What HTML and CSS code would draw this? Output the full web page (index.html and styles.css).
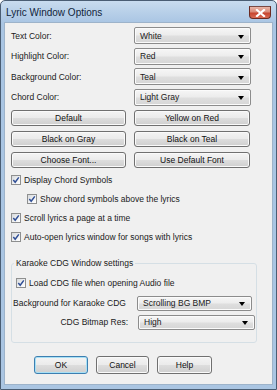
FILE: index.html
```html
<!DOCTYPE html>
<html>
<head>
<meta charset="utf-8">
<link rel="stylesheet" href="styles.css">
</head>
<body>
<div class="window">
  <div class="titlebar">
    <span class="title">Lyric Window Options</span>
    <span class="close"><svg width="11" height="8" viewBox="0 0 11 8"><path d="M2 1 L9 7 M9 1 L2 7" stroke="#fff" stroke-width="2.2" stroke-linecap="square"/></svg></span>
  </div>
  <div class="client">
    <div class="colors">
      <span class="lbl">Text Color:</span><div class="select">White<i class="arrow"></i></div>
      <span class="lbl">Highlight Color:</span><div class="select">Red<i class="arrow"></i></div>
      <span class="lbl">Background Color:</span><div class="select">Teal<i class="arrow"></i></div>
      <span class="lbl">Chord Color:</span><div class="select">Light Gray<i class="arrow"></i></div>
    </div>
    <div class="btngrid">
      <div class="btn">Default</div><div class="btn">Yellow on Red</div>
      <div class="btn">Black on Gray</div><div class="btn">Black on Teal</div>
      <div class="btn">Choose Font...</div><div class="btn">Use Default Font</div>
    </div>
    <div class="checks">
      <div class="check"><span class="box"></span>Display Chord Symbols</div>
      <div class="check indent"><span class="box"></span>Show chord symbols above the lyrics</div>
      <div class="check"><span class="box"></span>Scroll lyrics a page at a time</div>
      <div class="check"><span class="box"></span>Auto-open lyrics window for songs with lyrics</div>
    </div>
    <fieldset class="group">
      <legend>Karaoke CDG Window settings</legend>
      <div class="check gcheck"><span class="box"></span>Load CDG file when opening Audio file</div>
      <div class="grow g1"><span class="glbl">Background for Karaoke CDG</span><div class="select small s1">Scrolling BG BMP<i class="arrow"></i></div></div>
      <div class="grow g2"><span class="glbl right">CDG Bitmap Res:</span><div class="select small s2">High<i class="arrow"></i></div></div>
    </fieldset>
    <div class="footer">
      <div class="btn fbtn ok">OK</div>
      <div class="btn fbtn cancel">Cancel</div>
      <div class="btn fbtn help">Help</div>
    </div>
  </div>
</div>
</body>
</html>
```
FILE: styles.css
```css
* { box-sizing: border-box; }
html, body { margin: 0; padding: 0; background: #fff; }
body {
  font-family: "Liberation Sans", Arial, sans-serif;
  font-size: 8.5px;
  color: #1a1a1a;
}
.window {
  width: 277px;
  height: 390px;
  border: 1px solid #4a5d73;
  border-radius: 5px 5px 0 0;
  background: linear-gradient(180deg, #c9dcef 0px, #b7cfe8 12px, #a9c5e3 22px, #aac5e2 100%);
  display: flex;
  flex-direction: column;
  overflow: hidden;
}
.titlebar {
  height: 21px;
  flex: none;
  display: flex;
  align-items: flex-start;
  justify-content: space-between;
  padding: 0 5px 0 5px;
}
.title {
  font-size: 10px;
  color: #11243a;
  margin-top: 6px;
}
.close {
  width: 22px;
  height: 13px;
  margin-top: 5px;
  border: 1px solid #6b2a22;
  border-top-color: #7a4a44;
  border-radius: 0 0 4px 4px;
  background: linear-gradient(180deg, #e9b6a8 0%, #d98a78 45%, #c8452f 55%, #d86c55 100%);
  display: flex;
  align-items: center;
  justify-content: center;
}
.close svg { display: block; }
.client {
  flex: 1;
  margin: 0 3px 4px 3px;
  border: 1px solid #9db3ca;
  background: #f0f0f0;
  padding: 4px 0 0 6px;
}
.colors {
  display: grid;
  grid-template-columns: 123px 117px;
  grid-auto-rows: 17px;
  row-gap: 3.5px;
  align-items: center;
}
.lbl { padding-left: 0; }
.select {
  position: relative;
  height: 17px;
  border: 1px solid #8c8c8c;
  border-radius: 2px;
  background: linear-gradient(180deg, #f6f6f6 0%, #ececec 48%, #dfdfdf 52%, #d6d6d6 100%);
  display: flex;
  align-items: center;
  padding-left: 5px;
  box-shadow: inset 0 0 0 1px #fbfbfb;
}
.arrow {
  position: absolute;
  right: 6px;
  top: 50%;
  margin-top: -1px;
  width: 0;
  height: 0;
  border-left: 3.5px solid transparent;
  border-right: 3.5px solid transparent;
  border-top: 4px solid #000;
}
.btngrid {
  margin-top: 4.5px;
  display: grid;
  grid-template-columns: 115px 116px;
  grid-auto-rows: 16px;
  column-gap: 8px;
  row-gap: 5px;
}
.btn {
  border: 1px solid #707070;
  border-radius: 3px;
  background: linear-gradient(180deg, #f4f4f4 0%, #ebebeb 48%, #dddddd 52%, #cfcfcf 100%);
  box-shadow: inset 0 0 0 1px #fafafa;
  display: flex;
  align-items: center;
  justify-content: center;
  color: #111;
}
.checks { margin-top: 2.5px; }
.check {
  height: 19px;
  display: flex;
  align-items: center;
}
.check.indent { padding-left: 16px; }
.box {
  width: 10px;
  height: 10px;
  margin-right: 3px;
  border: 1px solid #8e8f8f;
  background:
    url("data:image/svg+xml;utf8,<svg xmlns='http://www.w3.org/2000/svg' width='8' height='8' viewBox='0 0 8 8'><path d='M1.3 4 L3.2 6.2 L6.8 1.4' fill='none' stroke='%23304f96' stroke-width='1.5'/></svg>") center/8px 8px no-repeat,
    linear-gradient(135deg, #d6d9dc 0%, #f2f3f4 60%, #ffffff 100%);
  flex: none;
}
.group {
  margin: 11px 0 0 0;
  padding: 0;
  width: 246px;
  height: 85.5px;
  border: 1px solid #d5dfe5;
  border-radius: 3px;
  min-width: 0;
}
.group legend {
  margin-left: 2px;
  padding: 0 2px;
  line-height: 11px;
}
.gcheck { padding-left: 4px; margin-top: 5px; }
.grow {
  display: flex;
  align-items: center;
  height: 15px;
}
.g1 { margin-top: 3px; }
.g2 { margin-top: 4px; }
.glbl { padding-left: 1px; width: 125px; flex: none; }
.glbl.right { text-align: right; padding-right: 9px; }
.select.small { height: 15px; }
.s1 { width: 115px; }
.s2 { width: 117px; margin-left: 1px; }
.footer {
  margin-top: 13px;
  padding-left: 23px;
  display: flex;
  gap: 8px;
}
.fbtn { height: 18px; }
.ok { width: 54px; border-color: #3c7fb1; box-shadow: inset 0 0 0 1px #a8e0f5; }
.cancel { width: 53px; }
.help { width: 55px; }
```
